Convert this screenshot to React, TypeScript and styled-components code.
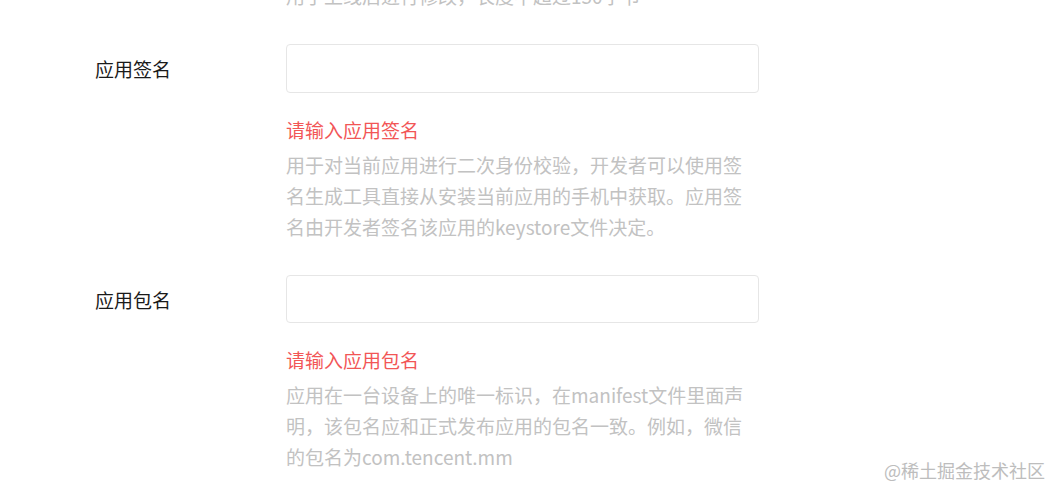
import styled, { createGlobalStyle } from "styled-components";

const GlobalStyle = createGlobalStyle`
  html, body {
    margin: 0;
    padding: 0;
    background: #ffffff;
    font-family: "Noto Sans CJK SC", "Noto Sans", sans-serif;
  }
`;

const Page = styled.div`
  position: relative;
  width: 1052px;
  height: 488px;
  overflow: hidden;
`;

const Form = styled.div`
  display: flex;
  flex-direction: column;
  gap: 33px;
  padding-left: 95px;
  margin-top: -20px;
`;

const Row = styled.div`
  display: grid;
  grid-template-columns: 191px 473px;
  align-items: start;
`;

const Label = styled.div`
  height: 49px;
  line-height: 49px;
  font-size: 19px;
  color: #1a1a1a;
`;

const Field = styled.div`
  display: flex;
  flex-direction: column;
`;

const Input = styled.input<{ $h?: number }>`
  box-sizing: border-box;
  width: 473px;
  height: ${(p) => p.$h ?? 49}px;
  border: 1px solid #e6e6e6;
  border-radius: 4px;
  outline: none;
  background: #fff;
  padding: 0 12px;
  font-size: 16px;
`;

const Error = styled.div`
  margin-top: 21px;
  font-size: 19px;
  line-height: 31px;
  color: #f25656;
`;

const Help = styled.div<{ $first?: boolean }>`
  margin-top: ${(p) => (p.$first ? "0" : "4px")};
  width: 460px;
  font-size: 19px;
  line-height: 31px;
  color: #c2c2c2;
  word-break: break-all;
`;

const Watermark = styled.div`
  position: absolute;
  right: 7px;
  bottom: 8px;
  font-size: 18px;
  line-height: 20px;
  color: #bdbdbd;
  font-family: "Noto Sans CJK SC", sans-serif;
`;

export default function App() {
  return (
    <Page>
      <GlobalStyle />
      <Form>
        <Row>
          <div />
          <Help $first>用于上线后进行修改，长度不超过150字节</Help>
        </Row>
        <Row>
          <Label>应用签名</Label>
          <Field>
            <Input />
            <Error>请输入应用签名</Error>
            <Help>
              用于对当前应用进行二次身份校验，开发者可以使用签名生成工具直接从安装当前应用的手机中获取。应用签名由开发者签名该应用的keystore文件决定。
            </Help>
          </Field>
        </Row>
        <Row>
          <Label>应用包名</Label>
          <Field>
            <Input $h={48} />
            <Error>请输入应用包名</Error>
            <Help>
              应用在一台设备上的唯一标识，在manifest文件里面声明，该包名应和正式发布应用的包名一致。例如，微信的包名为com.tencent.mm
            </Help>
          </Field>
        </Row>
      </Form>
      <Watermark>@稀土掘金技术社区</Watermark>
    </Page>
  );
}
